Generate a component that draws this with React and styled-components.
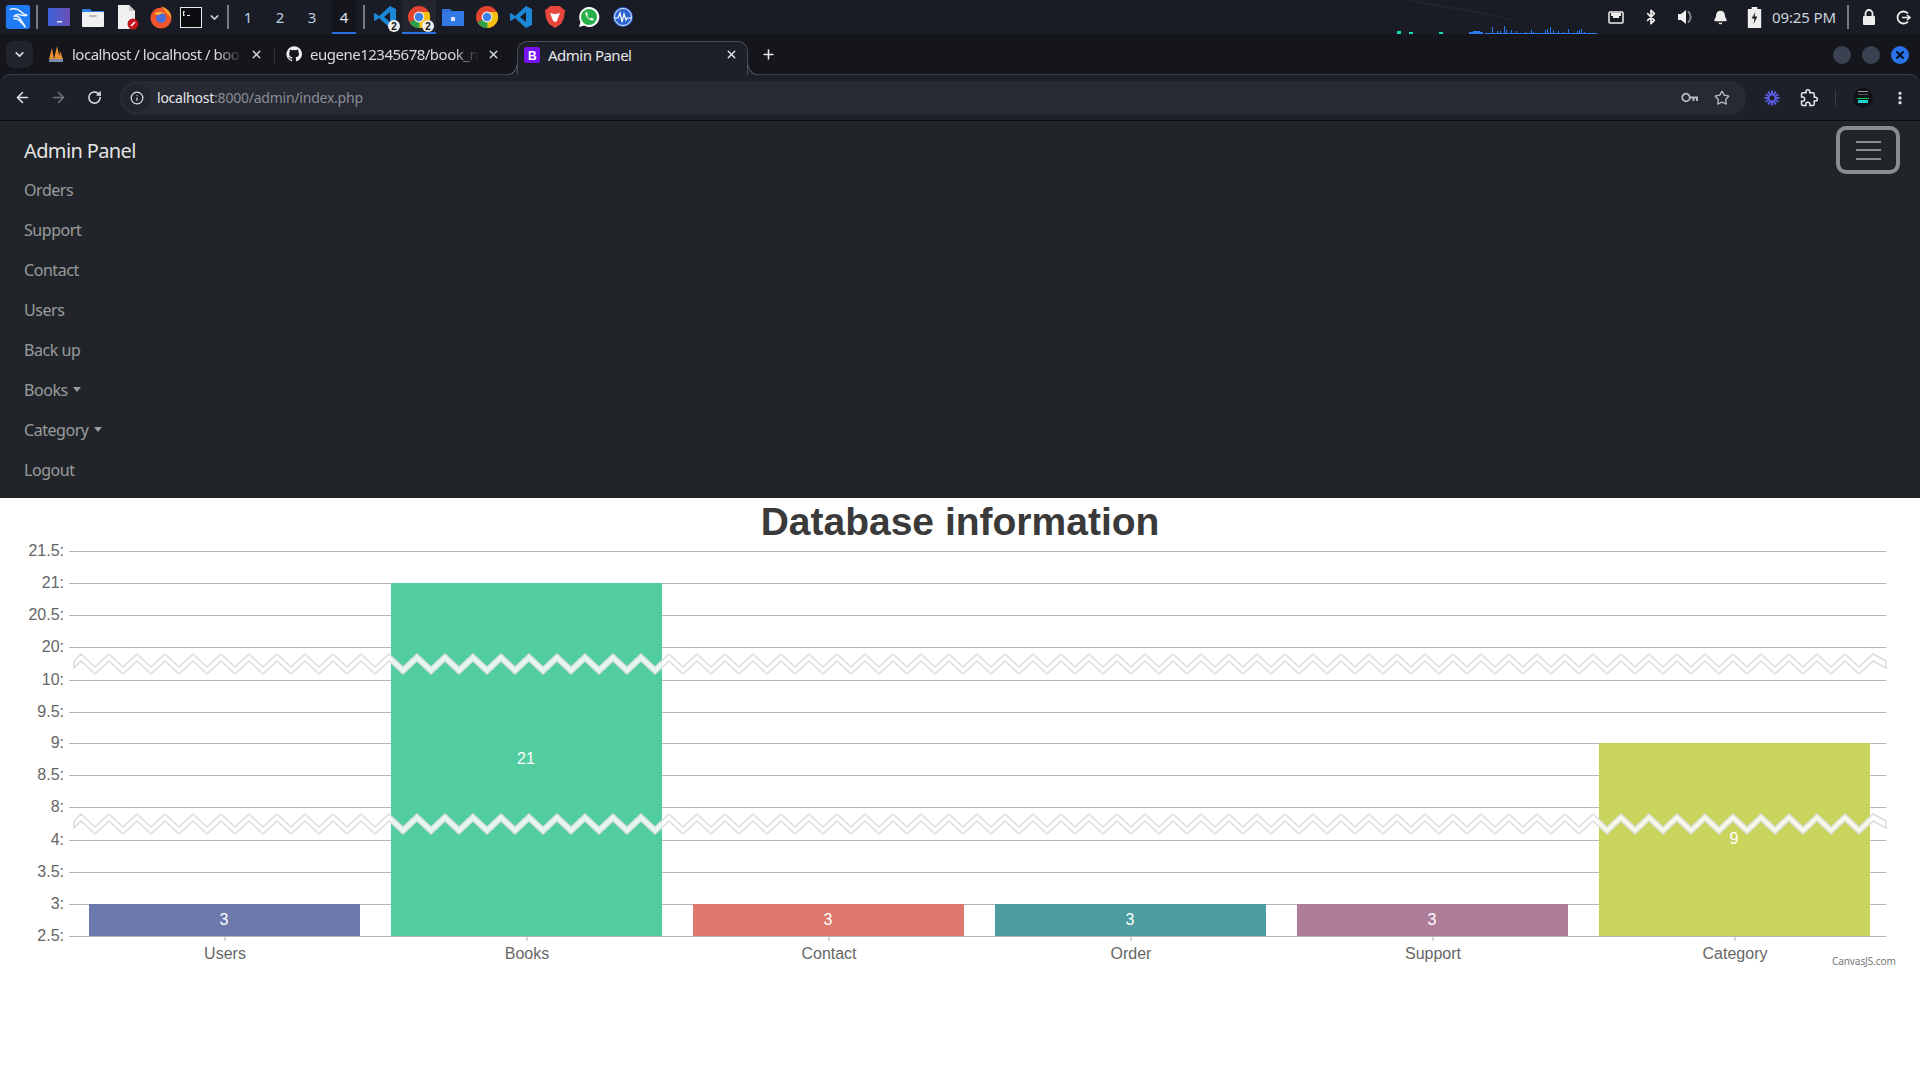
import React from "react";
import styled, { createGlobalStyle } from "styled-components";
import { ArrowLeft, ArrowRight, RotateCw, Info, Star, MoreVertical, Bell, Bluetooth, ChevronDown, X, Plus } from "lucide-react";

const Global = createGlobalStyle`
  html, body { margin: 0; padding: 0; background: #fff; }
  body { font-family: "Noto Sans", sans-serif; width: 1920px; height: 1080px; overflow: hidden; }
`;

const Taskbar = styled.div`
  height: 34px; background: #1a1c25; display: flex; align-items: center; position: relative;
  padding-left: 4px; color: #cfd6e0;
`;
const TrayIcon = styled.span`
  width: ${p => p.$w || 34}px; height: 34px; display: flex; align-items: center; justify-content: center; position: relative; flex: none;
`;
const Sep = styled.span`
  width: 2px; height: 24px; background: #777a80; flex: none; margin: 0 ${p => p.$m || 3}px;
`;
const Desk = styled.span`
  width: 32px; height: 34px; display: flex; align-items: center; justify-content: center; font-size: 15px; color: #bcd0e4; flex: none;
  ${p => p.$active ? "background:#14151b; box-shadow: inset 0 -2px 0 #2a72e0; color:#dfe6ee; width: 24px; margin: 0 4px;" : ""}
`;
const AppSlot = styled.span`
  width: ${p => p.$w || 34}px; height: 34px; display: flex; align-items: center; justify-content: center; position: relative; flex: none;
  ${p => p.$active ? "background:#23252e; box-shadow: inset 0 -2px 0 #2a72e0;" : ""}
`;
const Count = styled.span`
  position: absolute; right: 2px; bottom: 2px; width: 12px; height: 12px; border-radius: 50%; background: #eee; color: #111;
  font: 700 10px "Liberation Sans", sans-serif; display: flex; align-items: center; justify-content: center;
`;
const Spacer = styled.span` flex: 1; `;
const Clock = styled.span` width: 62px; font-size: 15px; letter-spacing: -.12px; color: #c9d3de; margin: 0 10px 0 1px; white-space: nowrap; flex: none; `;
const Meter = styled.svg` position: absolute; left: 1380px; top: 0; `;

const Frame = styled.div` background: #15161c; `;
const TabStrip = styled.div`
  height: 40px; display: flex; align-items: flex-end; padding-left: 6px; position: relative; z-index: 1;
`;
const TabMenu = styled.span`
  width: 27px; height: 27px; border-radius: 8px; background: #22242d; color: #ddd; display: flex; align-items: center; justify-content: center; margin: 0 15px 6px 0; flex: none;
`;
const Tab = styled.div`
  width: ${p => p.$w}px; height: 33px; display: flex; align-items: center; font-size: 15px; letter-spacing: -.5px; color: #d8dbe0; flex: none; box-sizing: border-box;
  padding: 0 ${p => p.$pr}px 7px ${p => p.$pad || 0}px; gap: 8px; position: relative;
  ${p => p.$sep ? "&::before { content:''; position:absolute; left:-4px; top:7px; width:1px; height:16px; background:#33353d; }" : ""}
  ${p => p.$active ? `
    background:#1e2029; border-radius: 10px 10px 0 0; border: 1px solid #4a4c55; border-bottom: none; height: 34px; margin-bottom: -1px; color:#e4e6ea;
    padding-bottom: 8px;
    &::before, &::after { content:''; position:absolute; bottom:0; width:10px; height:10px; }
    &::before { left:-11px; background: radial-gradient(circle at 0 0, transparent 9px, #4a4c55 9px, #4a4c55 10px, #1e2029 10.5px); }
    &::after { right:-11px; background: radial-gradient(circle at 100% 0, transparent 9px, #4a4c55 9px, #4a4c55 10px, #1e2029 10.5px); }
  ` : ""}
`;
const TabTitle = styled.span`
  flex: 1; white-space: nowrap; overflow: hidden;
  ${p => p.$fade ? "mask-image: linear-gradient(90deg,#000 85%,transparent);" : ""}
`;
const NewTab = styled.span` width: 40px; height: 33px; padding-bottom: 7px; box-sizing: border-box; display: flex; align-items: center; justify-content: center; color: #e8e8e8; flex: none; `;
const WinDot = styled.span`
  width: 18px; height: 18px; border-radius: 50%; background: ${p => p.$c}; margin: 0 11px 10px 0; flex: none;
  display: flex; align-items: center; justify-content: center; color: #0b1020;
`;

const Toolbar = styled.div`
  height: 47px; background: #1e2029; border-top: 1px solid #3c3e46; border-bottom: 1px solid #0b0c10; box-sizing: border-box;
  border-radius: 10px 10px 0 0; display: flex; align-items: center; padding-left: 4px; color: #d8dade;
`;
const NavBtn = styled.span`
  width: 36px; height: 34px; display: flex; align-items: center; justify-content: center; color: ${p => p.$dim ? "#70737b" : "#dfe1e5"}; flex: none;
`;
const Omnibox = styled.div`
  width: 1626px; height: 34px; margin-left: 8px; background: #272933; border-radius: 17px; display: flex; align-items: center; padding: 0 8px 0 3px; box-sizing: border-box; flex: none;
`;
const InfoChip = styled.span` width: 28px; height: 28px; border-radius: 50%; background: #22242d; display: flex; align-items: center; justify-content: center; flex: none; color: #e0e2e6; `;
const Url = styled.span` font-size: 14px; letter-spacing: -.23px; color: #8a8d95; margin-left: 6px; flex: 1; `;
const Host = styled.span` color: #e4e6ea; `;
const OmniIcon = styled.span` width: 32px; display: flex; justify-content: center; color: #b8bbc2; flex: none; `;
const ToolIcon = styled.span` width: 37px; display: flex; justify-content: center; color: #e4e6ea; flex: none; margin-left: ${p => p.$ml || 0}px; `;
const Divider = styled.span` width: 1px; height: 16px; background: #3a3c45; margin: 0 8px; flex: none; `;

const Navbar = styled.nav`
  background: #212529; padding: 8px 0 8px 24px; height: 377px; box-sizing: border-box; display: flex; flex-direction: column;
`;
const NavTop = styled.div` height: 41px; box-sizing: border-box; padding: 1px 24px 0 0; display: flex; align-items: center; justify-content: space-between; `;
const Brand = styled.a` font-size: 20px; letter-spacing: -.62px; color: rgba(255,255,255,.9); margin-top: 1px; `;
const Toggler = styled.button`
  width: 56px; height: 40px; padding: 0; background: transparent; border: none; border-radius: 6px;
  box-shadow: 0 0 0 4px #8b8c8f; display: flex; flex-direction: column; justify-content: center; align-items: center; gap: 6.5px;
`;
const Bar = styled.span` width: 25px; height: 2px; background: #8b8c8f; `;
const NavLink = styled.a`
  height: 40px; display: flex; align-items: center; font-size: 16px; letter-spacing: -.45px; color: rgba(255,255,255,.55);
`;
const Caret = styled.span`
  margin-left: 5px; margin-top: -1px; border-top: 5px solid rgba(255,255,255,.55); border-left: 4.8px solid transparent; border-right: 4.8px solid transparent;
`;

const ChartPanel = styled.section` background: #fff; display: flex; flex-direction: column; `;
const ChartTitle = styled.h1`
  margin: 0; height: 42px; padding-top: 5px; box-sizing: border-box; display: flex; align-items: center; justify-content: center;
  font: 700 39px "Liberation Sans", Arial, sans-serif; color: #3a3a3a; white-space: nowrap;
`;
const ChartSvg = styled.svg` display: block; `;

const ticks = [
  ["21.5", 551], ["21", 583], ["20.5", 615], ["20", 647], ["10", 680], ["9.5", 712], ["9", 743],
  ["8.5", 775], ["8", 807], ["4", 840], ["3.5", 872], ["3", 904], ["2.5", 936],
];
const bars = [
  { n: "Users", x: 89, t: 904, c: "#6d78ad", v: 3 },
  { n: "Books", x: 391, t: 583, c: "#51cda0", v: 21, ly: 764 },
  { n: "Contact", x: 693, t: 904, c: "#df7970", v: 3 },
  { n: "Order", x: 995, t: 904, c: "#4c9ca0", v: 3 },
  { n: "Support", x: 1297, t: 904, c: "#ae7d99", v: 3 },
  { n: "Category", x: 1599, t: 743, c: "#c9d45c", v: 9, ly: 844 },
];
const OFF = 540;
function zig(y) {
  const top = []; const bottom = [];
  let up = true;
  const pts = [[74, y + 7]];
  for (let px = 81; px <= 1886; px += 14) { pts.push([px, up ? y : y + 13]); up = !up; }
  pts.push([1886, y + 7]);
  pts.forEach(([a, b]) => { top.push(`${a},${b}`); bottom.unshift(`${a},${b + 7}`); });
  return [...top, ...bottom].join(" ");
}

function Chart() {
  return (
    <ChartSvg width="1920" height="540" viewBox={`0 ${OFF} 1920 540`} fontFamily="Liberation Sans, Arial, sans-serif">
      {ticks.map(([l, y]) => (
        <g key={l}>
          <line x1="69" x2="1886" y1={y + .5} y2={y + .5} stroke="#b5b5b5" />
          <text x="64" y={y + 5} fontSize="16" fill="#666" textAnchor="end">{l}:</text>
        </g>
      ))}
      {bars.map(b => (
        <g key={b.n}>
          <rect x={b.x} y={b.t} width="271" height={936 - b.t} fill={b.c} />
          <line x1={b.x + 136} x2={b.x + 136} y1="936" y2="941" stroke="#b5b5b5" />
          <text x={b.x + 136} y="959" fontSize="16" fill="#666" textAnchor="middle">{b.n}</text>
          <text x={b.x + 135} y={(b.ly || 925)} fontSize="16" fill="#fff" textAnchor="middle">{b.v}</text>
        </g>
      ))}
      <polygon points={zig(654)} fill="#fff" fillOpacity=".85" stroke="#dcdcdc" strokeWidth="1.5" />
      <polygon points={zig(814)} fill="#fff" fillOpacity=".85" stroke="#dcdcdc" strokeWidth="1.5" />
      <text x="1832" y="965" fontSize="10" letterSpacing="-.08" fill="#777" fontFamily="Noto Sans, sans-serif">CanvasJS.com</text>
    </ChartSvg>
  );
}

const Kali = () => (
  <svg width="26" height="26" viewBox="0 0 28 28"><rect x="1" y="1" width="26" height="26" rx="3" fill="#1f7af5" /><path d="M5 6c5-2 10 0 13 3 2 2 4 3 6 3-2 1-4 1-6 0-3-1-6-1-8 1 3 0 6 1 7 4 1 2 3 4 5 8-2-3-5-5-7-8-2-1-4-1-6-1" fill="none" stroke="#eaf3ff" strokeWidth="1.6" /></svg>
);
const Desktop = () => (
  <svg width="24" height="20" viewBox="0 0 24 20"><defs><linearGradient id="dg" x1="0" x2="1"><stop stopColor="#3d63d8" /><stop offset="1" stopColor="#6a4fb6" /></linearGradient></defs><rect x="1" y="1" width="22" height="18" rx="1" fill="url(#dg)" /><rect x="10" y="14" width="5" height="1.5" fill="#dfe4ff" /></svg>
);
const Folder = () => (
  <svg width="24" height="22" viewBox="0 0 24 22"><path d="M1 3h8l2 2h12v4H1z" fill="#2f7fe0" /><rect x="1" y="6" width="22" height="15" rx="1" fill="#f1f1f1" /><rect x="8" y="9" width="8" height="2" rx="1" fill="#bbb" /></svg>
);
const NoteIcon = () => (
  <svg width="24" height="26" viewBox="0 0 24 26"><path d="M3 1h11l6 6v18H3z" fill="#f0f0f0" /><path d="M14 1l6 6h-6z" fill="#c9c9c9" /><circle cx="18" cy="20" r="5.5" fill="#c4161c" /><path d="M16 22l4-4" stroke="#fff" strokeWidth="1.6" /></svg>
);
const Firefox = () => (
  <svg width="24" height="24" viewBox="0 0 24 24"><circle cx="12" cy="13" r="10.5" fill="#f0542d" /><path d="M12 1c6 2 11 7 10 13-1-3-3-5-5-6-1-3-3-5-5-7z" fill="#fca32a" /><circle cx="12" cy="13" r="5" fill="#4a6fdc" /><path d="M5 9c3-3 8-3 11 0-3-1-5 0-6 1z" fill="#ffb52e" /></svg>
);
const Terminal = () => (
  <svg width="22" height="21" viewBox="0 0 22 21"><rect x=".5" y=".5" width="21" height="20" fill="#0b0c10" stroke="#e8e8e8" /><path d="M3.5 4v5M3 5h2M3 8h2M7 8.500h3" stroke="#eee" strokeWidth="1" /></svg>
);
const VSCode = () => (
  <svg width="24" height="24" viewBox="0 0 24 24"><path d="M17 1l6 3v16l-6 3-11-10-4 3-1-1V9l1-1 4 3zM17 7l-6 5 6 5z" fill="#1b87d8" fillRule="evenodd" /></svg>
);
const Chrome = ({ s = 24 }) => (
  <svg width={s} height={s} viewBox="0 0 24 24"><circle cx="12" cy="12" r="11" fill="#e2442f" /><path d="M12 12L2.500 17.500A11 11 0 0 0 12 23c1.500 0 3-.3 4-1z" fill="#2fa04a" /><path d="M12 7h10a11 11 0 0 1-9.500 16z" fill="#f4c20d" /><circle cx="12" cy="12" r="5.400" fill="#eee" /><circle cx="12" cy="12" r="4.200" fill="#3f7fe8" /></svg>
);
const BlueFolder = () => (
  <svg width="24" height="20" viewBox="0 0 24 20"><path d="M1 2h8l2 2h12v15H1z" fill="#2f6fdc" /><rect x="1" y="5" width="22" height="14" rx="1" fill="#3279e6" /><rect x="10" y="10" width="4" height="4" fill="#d8e6ff" /></svg>
);
const Brave = () => (
  <svg width="22" height="24" viewBox="0 0 22 24"><path d="M6 1h10l3 3 2 1-1 8-3 6-6 4-6-4-3-6-1-8 2-1z" fill="#e8453c" /><path d="M6 8l4 1h2l4-1-2 5-1 3-2 1-2-1-1-3z" fill="#fff" /></svg>
);
const Whats = () => (
  <svg width="24" height="24" viewBox="0 0 24 24"><path d="M12 2a10 10 0 0 0-8.500 15L2 22l5.200-1.400A10 10 0 1 0 12 2z" fill="#fff" /><circle cx="12" cy="12" r="8" fill="#25b04a" /><path d="M8.500 7.500l1.500-.5 1 2.500-1 1c.6 1.500 1.800 2.700 3.300 3.300l1-1 2.500 1-.5 1.500c-3.500 1-8.500-4-7.800-7.800z" fill="#fff" /></svg>
);
const Monitor = () => (
  <svg width="22" height="22" viewBox="0 0 22 22"><circle cx="11" cy="11" r="10" fill="#2b63cf" /><circle cx="11" cy="11" r="8.500" fill="none" stroke="#e4ecff" strokeWidth="1" /><path d="M3 12h3l2-5 2 9 2-8 2 6 1-2h4" fill="none" stroke="#fff" strokeWidth="1.200" /></svg>
);
const NetIcon = () => (
  <svg width="16" height="13" viewBox="0 0 16 13"><rect x="1" y="1" width="14" height="11" rx="1" fill="none" stroke="#eee" strokeWidth="1.500" /><path d="M3 2h10v3h-2v2H5V5H3z" fill="#eee" /></svg>
);
const Volume = () => (
  <svg width="17" height="16" viewBox="0 0 17 16"><path d="M1 5h3l5-4v14l-5-4H1z" fill="#eee" /><path d="M11 2.500a7 7 0 0 1 0 11" fill="none" stroke="#8b8d92" strokeWidth="1.800" /></svg>
);
const Battery = () => (
  <svg width="15" height="21" viewBox="0 0 14 22"><path d="M4 0h6v2h4v20H0V2h4z" fill="#eee" /><path d="M8 5L4 12h3l-1 6 4-8H7z" fill="#1a1c25" /></svg>
);
const LockIcon = () => (
  <svg width="14" height="16" viewBox="0 0 14 16"><path d="M3.500 7V4.500a3.500 3.500 0 0 1 7 0V7" fill="none" stroke="#eee" strokeWidth="1.800" /><rect x="1" y="7" width="12" height="9" rx="1" fill="#eee" /></svg>
);
const LogoutIcon = () => (
  <svg width="15" height="15" viewBox="0 0 15 15"><path d="M12 3.500A6 6 0 1 0 12 11.500" fill="none" stroke="#eee" strokeWidth="1.800" /><path d="M6 7.500h8M11 5l3 2.500L11 10" fill="none" stroke="#eee" strokeWidth="1.500" /></svg>
);
const Pma = () => (
  <svg width="16" height="17" viewBox="0 0 16 17"><path d="M4 2L1 13h5zM9 0L6 13h6zM12 5l-1 8h4z" fill="#e8902f" /><rect x="1" y="13" width="14" height="3" fill="#7d8aa8" /></svg>
);
const GitHub = () => (
  <svg width="16" height="16" viewBox="0 0 24 24"><path fill="#eee" d="M12 .5a11.500 11.500 0 0 0-3.600 22.400c.6.100.8-.3.800-.6v-2c-3.200.7-3.900-1.500-3.900-1.500-.5-1.300-1.300-1.700-1.300-1.700-1-.7.100-.7.100-.7 1.200.1 1.800 1.200 1.800 1.200 1 1.800 2.700 1.300 3.400 1 .1-.8.400-1.300.7-1.600-2.600-.3-5.300-1.300-5.300-5.700 0-1.300.5-2.300 1.200-3.100-.1-.3-.5-1.500.1-3.100 0 0 1-.3 3.200 1.200a11 11 0 0 1 5.800 0c2.200-1.500 3.200-1.200 3.200-1.200.6 1.600.2 2.800.1 3.100.7.800 1.200 1.800 1.200 3.100 0 4.400-2.700 5.400-5.300 5.700.4.400.8 1.100.8 2.200v3.200c0 .3.200.7.800.6A11.500 11.500 0 0 0 12 .5z" /></svg>
);
const BootstrapIcon = () => (
  <svg width="16" height="16" viewBox="0 0 16 16"><rect width="16" height="16" rx="2.500" fill="#7613f0" /><text x="8" y="12.500" fontSize="12" fontWeight="700" textAnchor="middle" fill="#fff" fontFamily="Liberation Sans, sans-serif">B</text></svg>
);
const KeyIcon = () => (
  <svg width="18" height="11" viewBox="0 0 18 11"><circle cx="5" cy="5.500" r="3.800" fill="none" stroke="#b8bbc2" strokeWidth="1.800" /><path d="M8.800 4.500h8.200v4.500h-2V6.500h-1.500V9h-2V6.500H8.800z" fill="#b8bbc2" /></svg>
);
const Spark = () => (
  <svg width="16" height="16" viewBox="0 0 16 16" stroke="#5b5ce6" strokeWidth="2">{[0,30,60,90,120,150].map(a => <line key={a} x1="8" y1="0.500" x2="8" y2="15.500" transform={`rotate(${a} 8 8)`} />)}<circle cx="8" cy="8" r="2.500" fill="#1e2029" stroke="none" /></svg>
);
const PuzzleIcon = () => (
  <svg width="18" height="18" viewBox="0 0 24 24"><path d="M20.500 11H19V7c0-1.100-.9-2-2-2h-4V3.500C13 2.120 11.880 1 10.500 1S8 2.120 8 3.500V5H4c-1.100 0-1.990.9-1.990 2v3.800H3.500c1.490 0 2.700 1.210 2.700 2.700s-1.210 2.700-2.700 2.700H2V20c0 1.100.9 2 2 2h3.800v-1.500c0-1.490 1.210-2.700 2.700-2.700 1.490 0 2.700 1.210 2.700 2.700V22H17c1.100 0 2-.9 2-2v-4h1.500c1.380 0 2.500-1.120 2.500-2.500S21.880 11 20.500 11z" fill="none" stroke="#e4e6ea" strokeWidth="2" /></svg>
);
const Avatar = () => (
  <svg width="20" height="20" viewBox="0 0 20 20"><circle cx="10" cy="10" r="10" fill="#101216" /><rect x="5" y="3" width="10" height="1" fill="#999" /><rect x="5" y="6" width="10" height="1" fill="#555" /><rect x="4" y="10" width="12" height="1" fill="#0c6" /><rect x="5" y="12" width="10" height="3" fill="#1dd4d4" /></svg>
);
const spikes = [[112,6],[117,2],[120,2],[124,7],[126,3],[131,3],[136,2],[145,1],[151,3],[153,1],[165,3],[167,4],[170,6],[173,3],[178,2],[183,1],[188,4],[197,2],[199,3],[201,4],[204,1]];

export default function App() {
  return (
    <>
      <Global />
      <Taskbar>
        <TrayIcon $w={28}><Kali /></TrayIcon>
        <Sep $m={4} />
        <TrayIcon><Desktop /></TrayIcon>
        <TrayIcon><Folder /></TrayIcon>
        <TrayIcon><NoteIcon /></TrayIcon>
        <TrayIcon><Firefox /></TrayIcon>
        <TrayIcon $w={26}><Terminal /></TrayIcon>
        <TrayIcon $w={20}><ChevronDown size={13} strokeWidth={3} color="#ccc" /></TrayIcon>
        <Sep $m={3} />
        <Desk>1</Desk><Desk>2</Desk><Desk>3</Desk><Desk $active>4</Desk>
        <Sep $m={3} />
        <AppSlot><VSCode /><Count>2</Count></AppSlot>
        <AppSlot $active><Chrome /><Count>2</Count></AppSlot>
        <AppSlot><BlueFolder /></AppSlot>
        <AppSlot><Chrome /></AppSlot>
        <AppSlot><VSCode /></AppSlot>
        <AppSlot><Brave /></AppSlot>
        <AppSlot><Whats /></AppSlot>
        <AppSlot><Monitor /></AppSlot>
        <Spacer />
        <Meter width="230" height="34">
          <path d="M30 0c30 8 70 10 100 20" fill="none" stroke="#24262c" strokeWidth="1.500" />
          <rect x="17" y="31" width="4" height="3" fill="#18d8b8" />
          <rect x="29" y="32" width="4" height="2" fill="#18d8b8" />
          <rect x="59" y="32" width="4" height="2" fill="#18d8b8" />
          <rect x="89" y="32" width="14" height="2" fill="#2a7af0" />
          <rect x="93" y="31" width="7" height="1" fill="#2a7af0" />
          <rect x="105" y="33" width="112" height="1" fill="#2a7af0" />
          {spikes.map(([x, h]) => <rect key={x} x={x} y={34 - h - 1} width="1" height={h} fill="#2a7af0" />)}
        </Meter>
        <TrayIcon $w={35}><NetIcon /></TrayIcon>
        <TrayIcon $w={35}><Bluetooth size={16} color="#eee" strokeWidth={2.6} /></TrayIcon>
        <TrayIcon $w={35}><Volume /></TrayIcon>
        <TrayIcon $w={34}><Bell size={15} color="#eee" fill="#eee" /></TrayIcon>
        <TrayIcon $w={34}><Battery /></TrayIcon>
        <Clock>09:25 PM</Clock>
        <Sep $m={3} />
        <TrayIcon $w={34}><LockIcon /></TrayIcon>
        <TrayIcon $w={34}><LogoutIcon /></TrayIcon>
      </Taskbar>
      <Frame>
        <TabStrip>
          <TabMenu><ChevronDown size={13} strokeWidth={3} /></TabMenu>
          <Tab $w={230} $pr={15}>
            <Pma /><TabTitle $fade>localhost / localhost / boo</TabTitle><X size={13} strokeWidth={2.5} />
          </Tab>
          <Tab $w={239} $pad={8} $pr={17} $sep>
            <GitHub /><TabTitle $fade>eugene12345678/book_m</TabTitle><X size={13} strokeWidth={2.5} />
          </Tab>
          <Tab $w={231} $pad={6} $pr={9} $active>
            <BootstrapIcon /><TabTitle>Admin Panel</TabTitle><X size={13} strokeWidth={2.5} />
          </Tab>
          <NewTab><Plus size={15} strokeWidth={2.5} /></NewTab>
          <Spacer />
          <WinDot $c="#3a4150" /><WinDot $c="#3a4150" />
          <WinDot $c="#2a72e8"><X size={12} strokeWidth={4} /></WinDot>
        </TabStrip>
        <Toolbar>
          <NavBtn><ArrowLeft size={17} strokeWidth={2.2} /></NavBtn>
          <NavBtn $dim><ArrowRight size={17} strokeWidth={2.2} /></NavBtn>
          <NavBtn><RotateCw size={15} strokeWidth={2.4} /></NavBtn>
          <Omnibox>
            <InfoChip><Info size={14} strokeWidth={2} /></InfoChip>
            <Url><Host>localhost</Host>:8000/admin/index.php</Url>
            <OmniIcon><KeyIcon /></OmniIcon>
            <OmniIcon><Star size={16} strokeWidth={2} /></OmniIcon>
          </Omnibox>
          <ToolIcon $ml={7}><Spark /></ToolIcon>
          <ToolIcon><PuzzleIcon /></ToolIcon>
          <Divider />
          <ToolIcon><Avatar /></ToolIcon>
          <ToolIcon><MoreVertical size={16} strokeWidth={3} /></ToolIcon>
        </Toolbar>
      </Frame>
      <Navbar>
        <NavTop>
          <Brand>Admin Panel</Brand>
          <Toggler><Bar /><Bar /><Bar /></Toggler>
        </NavTop>
        <NavLink>Orders</NavLink>
        <NavLink>Support</NavLink>
        <NavLink>Contact</NavLink>
        <NavLink>Users</NavLink>
        <NavLink>Back up</NavLink>
        <NavLink>Books<Caret /></NavLink>
        <NavLink>Category<Caret /></NavLink>
        <NavLink>Logout</NavLink>
      </Navbar>
      <ChartPanel>
        <ChartTitle>Database information</ChartTitle>
        <Chart />
      </ChartPanel>
    </>
  );
}
